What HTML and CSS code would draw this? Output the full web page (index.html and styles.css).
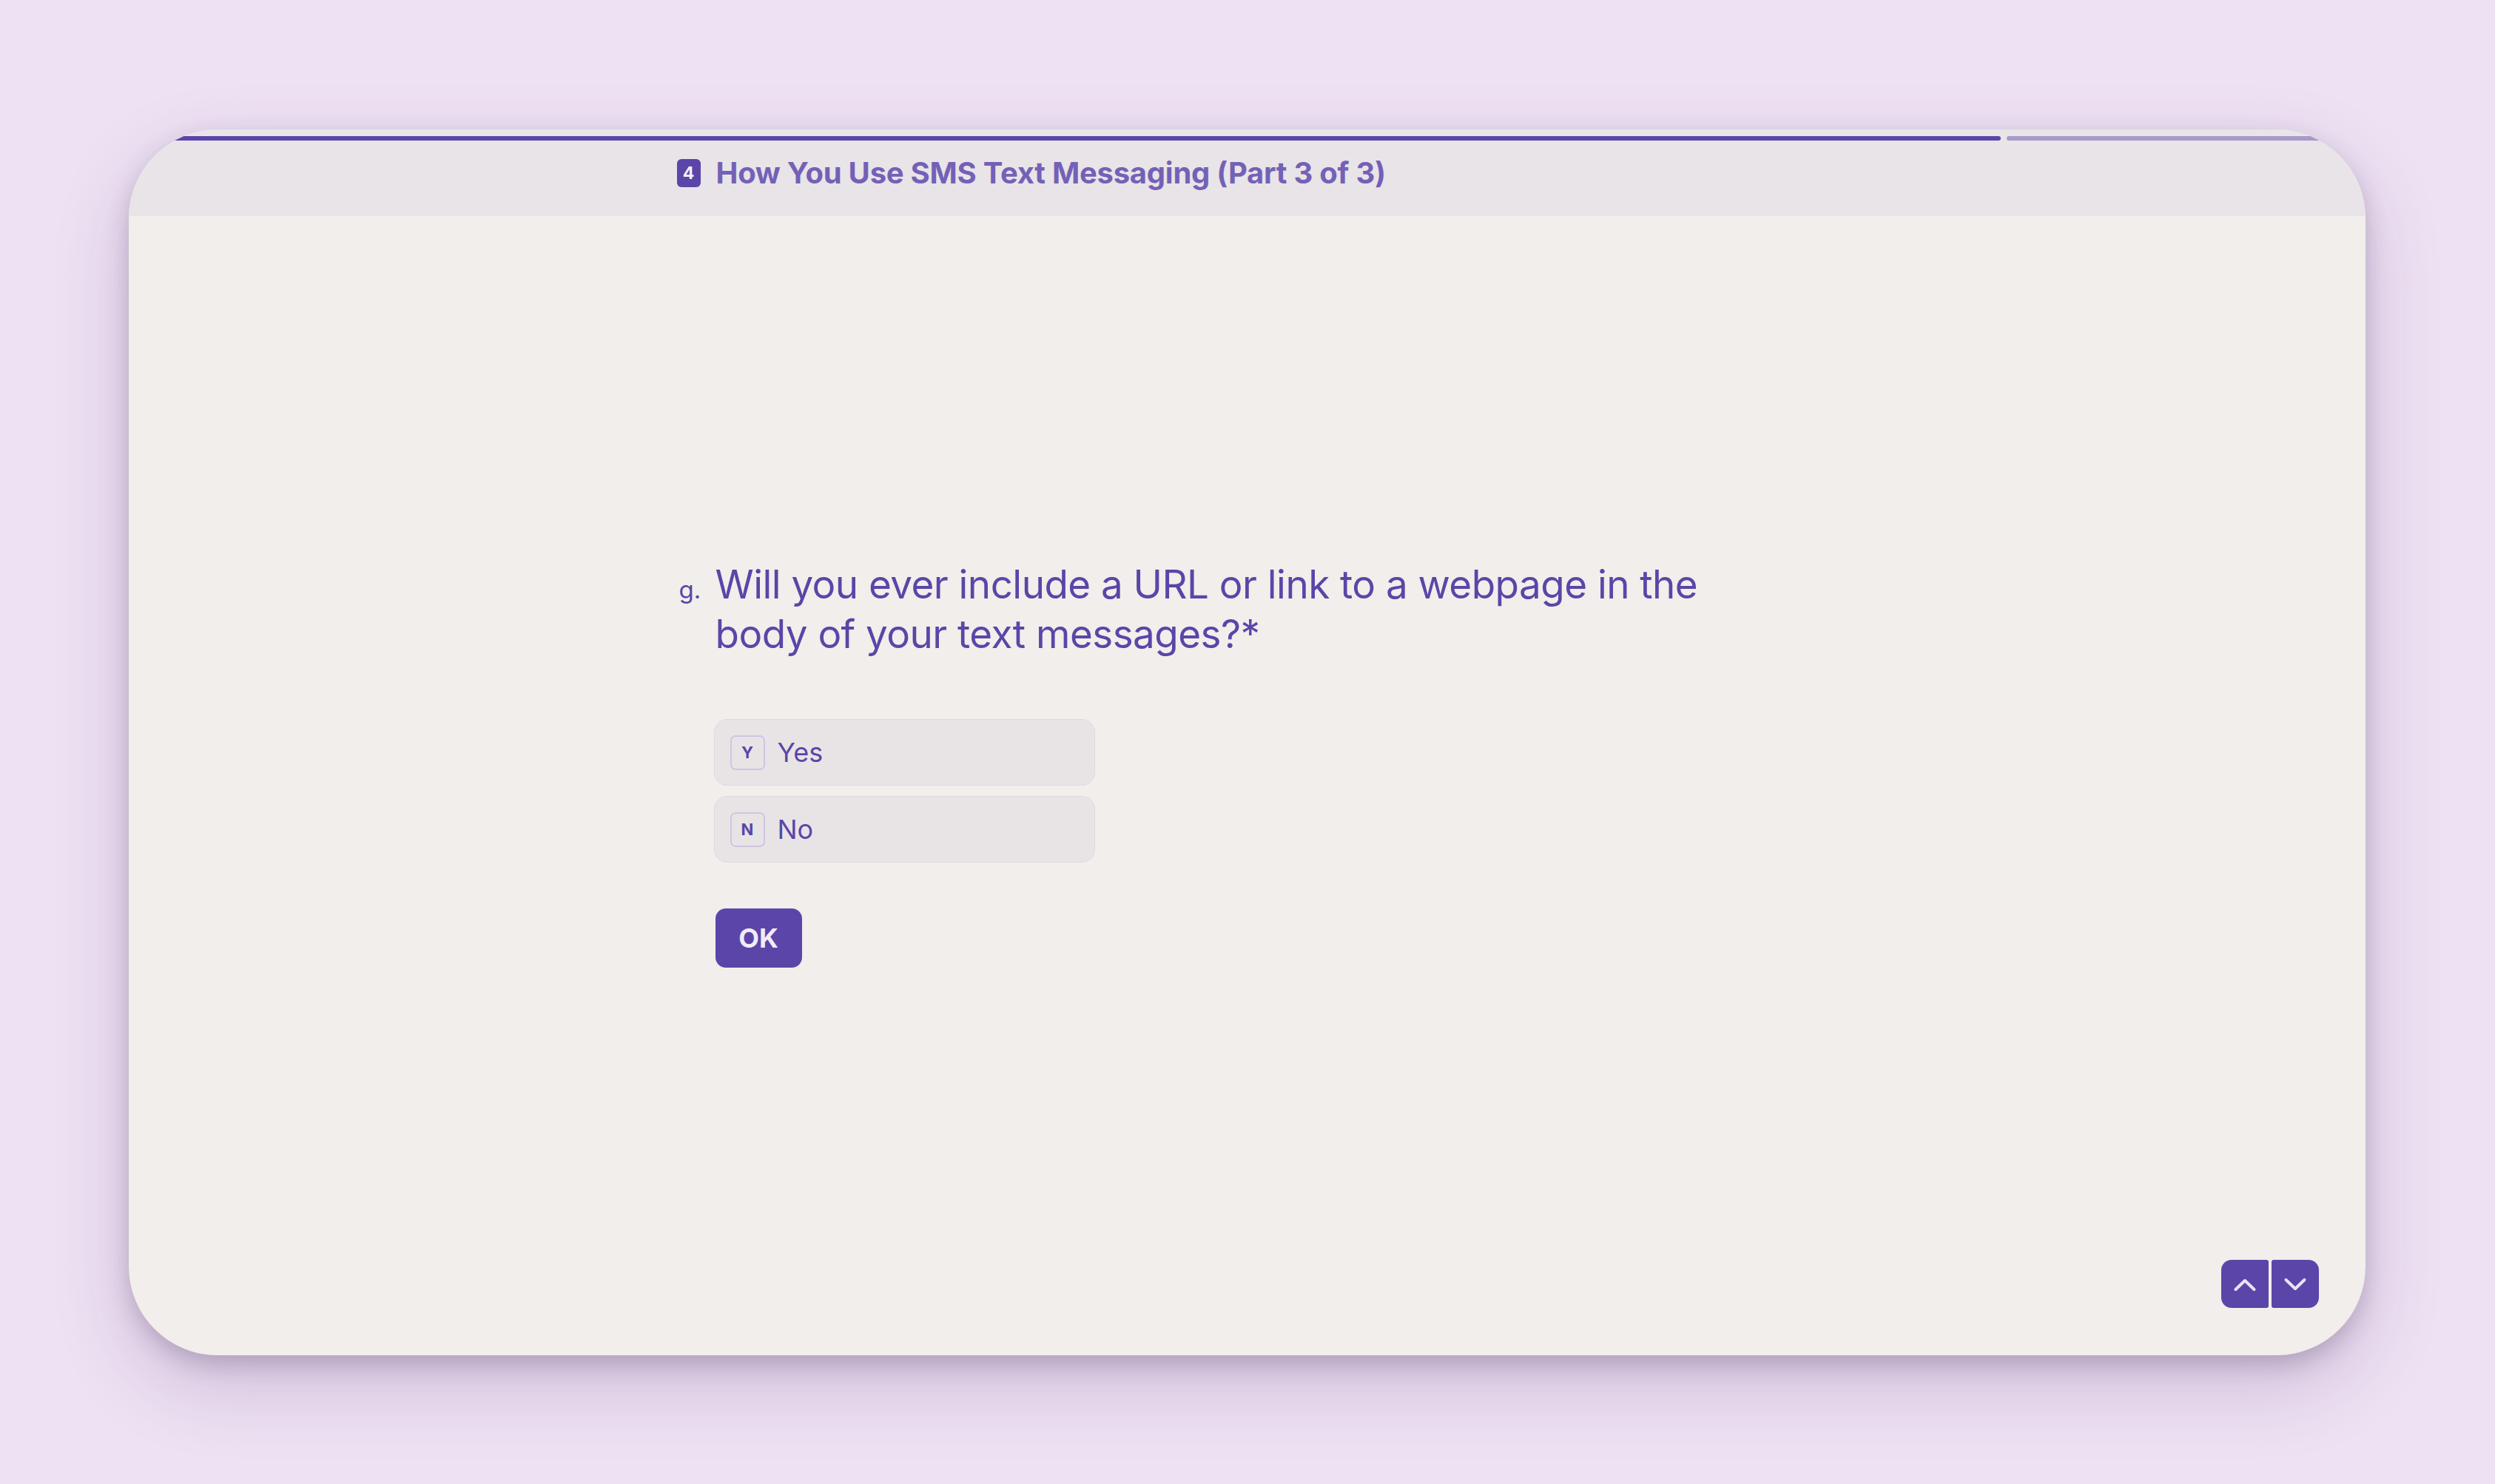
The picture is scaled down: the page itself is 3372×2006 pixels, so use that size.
FILE: index.html
```html
<!DOCTYPE html>
<html lang="en">
<head>
<meta charset="utf-8">
<title>How You Use SMS Text Messaging (Part 3 of 3)</title>
<link rel="stylesheet" href="styles.css">
</head>
<body>
<div class="card">
  <header class="header">
    <div class="progress">
      <div class="seg seg-done" style="width: 83.7%"></div>
      <div class="seg seg-todo"></div>
    </div>
    <div class="header-row">
      <div class="column title-line">
        <span class="badge">4</span>
        <span class="title">How You Use SMS Text Messaging (Part 3 of 3)</span>
      </div>
    </div>
  </header>
  <main class="content">
    <div class="column">
      <div class="question">
        <span class="qnum">g.</span>
        <h1 class="qtext">Will you ever include a URL or link to a webpage in the body of your text messages?*</h1>
      </div>
      <div class="options">
        <div class="option"><span class="key">Y</span><span class="label">Yes</span></div>
        <div class="option"><span class="key">N</span><span class="label">No</span></div>
      </div>
      <button class="ok">OK</button>
    </div>
  </main>
  <nav class="nav">
    <button class="nav-btn nav-up" aria-label="Previous">
      <svg viewBox="0 0 64 64" width="64" height="64"><polyline points="19.5,39 32,27 44.5,39" fill="none" stroke="#EAE3F6" stroke-width="4" stroke-linecap="round" stroke-linejoin="round"/></svg>
    </button>
    <button class="nav-btn nav-down" aria-label="Next">
      <svg viewBox="0 0 64 64" width="64" height="64"><polyline points="19.5,26 32,38 44.5,26" fill="none" stroke="#EAE3F6" stroke-width="4" stroke-linecap="round" stroke-linejoin="round"/></svg>
    </button>
  </nav>
</div>
</body>
</html>
```
FILE: styles.css
```css
* { box-sizing: border-box; }
html, body { height: 100%; }
body {
  margin: 0;
  padding: 175px 175px 174px 174px;
  background: #EEE1F3;
  font-family: "Inter", "Noto Sans", sans-serif;
  color: #5B45A8;
}
.card {
  position: relative;
  height: 100%;
  border-radius: 120px;
  overflow: hidden;
  background: #F1EEEB;
  display: flex;
  flex-direction: column;
  box-shadow: 0 12px 30px rgba(60, 40, 80, 0.22), 0 40px 100px rgba(90, 60, 120, 0.22);
}
.header {
  height: 117px;
  flex: none;
  background: #E8E4E8;
  display: grid;
}
.progress, .header-row { grid-area: 1 / 1; }
.progress {
  align-self: start;
  display: flex;
  gap: 8px;
  padding-top: 9px;
}
.seg { height: 6px; border-radius: 3px; }
.seg-done { background: #5B45A8; flex: none; }
.seg-todo { background: #A899C9; flex: 1; margin-right: 40px; }
.header-row {
  display: flex;
  align-items: center;
}
.column {
  width: 1542px;
  margin: 0 auto;
}
.title-line {
  display: flex;
  align-items: center;
}
.badge {
  width: 32px;
  height: 38px;
  border-radius: 6px;
  background: #5B45A8;
  color: #F4F0FA;
  font-weight: 700;
  font-size: 23px;
  display: flex;
  align-items: center;
  justify-content: center;
}
.title {
  margin-left: 21px;
  font-size: 40px;
  font-weight: 700;
  letter-spacing: -0.25px;
  color: #7461B6;
}
.content {
  flex: 1;
  padding-top: 465px;
}
.question {
  display: flex;
  align-items: baseline;
}
.qnum {
  width: 52px;
  flex: none;
  padding-left: 3px;
  font-size: 33px;
}
.qtext {
  margin: 0;
  max-width: 1400px;
  font-size: 53px;
  line-height: 67px;
  font-weight: 400;
  letter-spacing: -0.55px;
}
.options {
  margin: 81px 0 0 50px;
  display: flex;
  flex-direction: column;
  gap: 14px;
}
.option {
  width: 515px;
  height: 90px;
  border: 1px solid #DED8E0;
  border-radius: 18px;
  background: #E8E4E6;
  display: flex;
  align-items: center;
  padding-left: 21px;
}
.key {
  width: 47px;
  height: 47px;
  border: 2px solid #CFC5E2;
  border-radius: 7px;
  display: flex;
  align-items: center;
  justify-content: center;
  font-size: 22px;
  font-weight: 700;
}
.label {
  margin-left: 17px;
  font-size: 36px;
}
.ok {
  margin: 62px 0 0 52px;
  width: 117px;
  height: 80px;
  border: none;
  border-radius: 14px;
  background: #5C45A9;
  color: #F1ECF7;
  font-family: inherit;
  font-size: 36px;
  font-weight: 700;
  padding: 0;
}
.nav {
  position: absolute;
  right: 63px;
  bottom: 64px;
  display: flex;
  gap: 4px;
}
.nav-btn {
  width: 64px;
  height: 65px;
  border: none;
  padding: 0;
  background: #5C45A9;
  display: flex;
  align-items: center;
  justify-content: center;
}
.nav-up { border-radius: 14px 3px 3px 14px; }
.nav-down { border-radius: 3px 14px 14px 3px; }
.nav-btn svg { display: block; }
```
